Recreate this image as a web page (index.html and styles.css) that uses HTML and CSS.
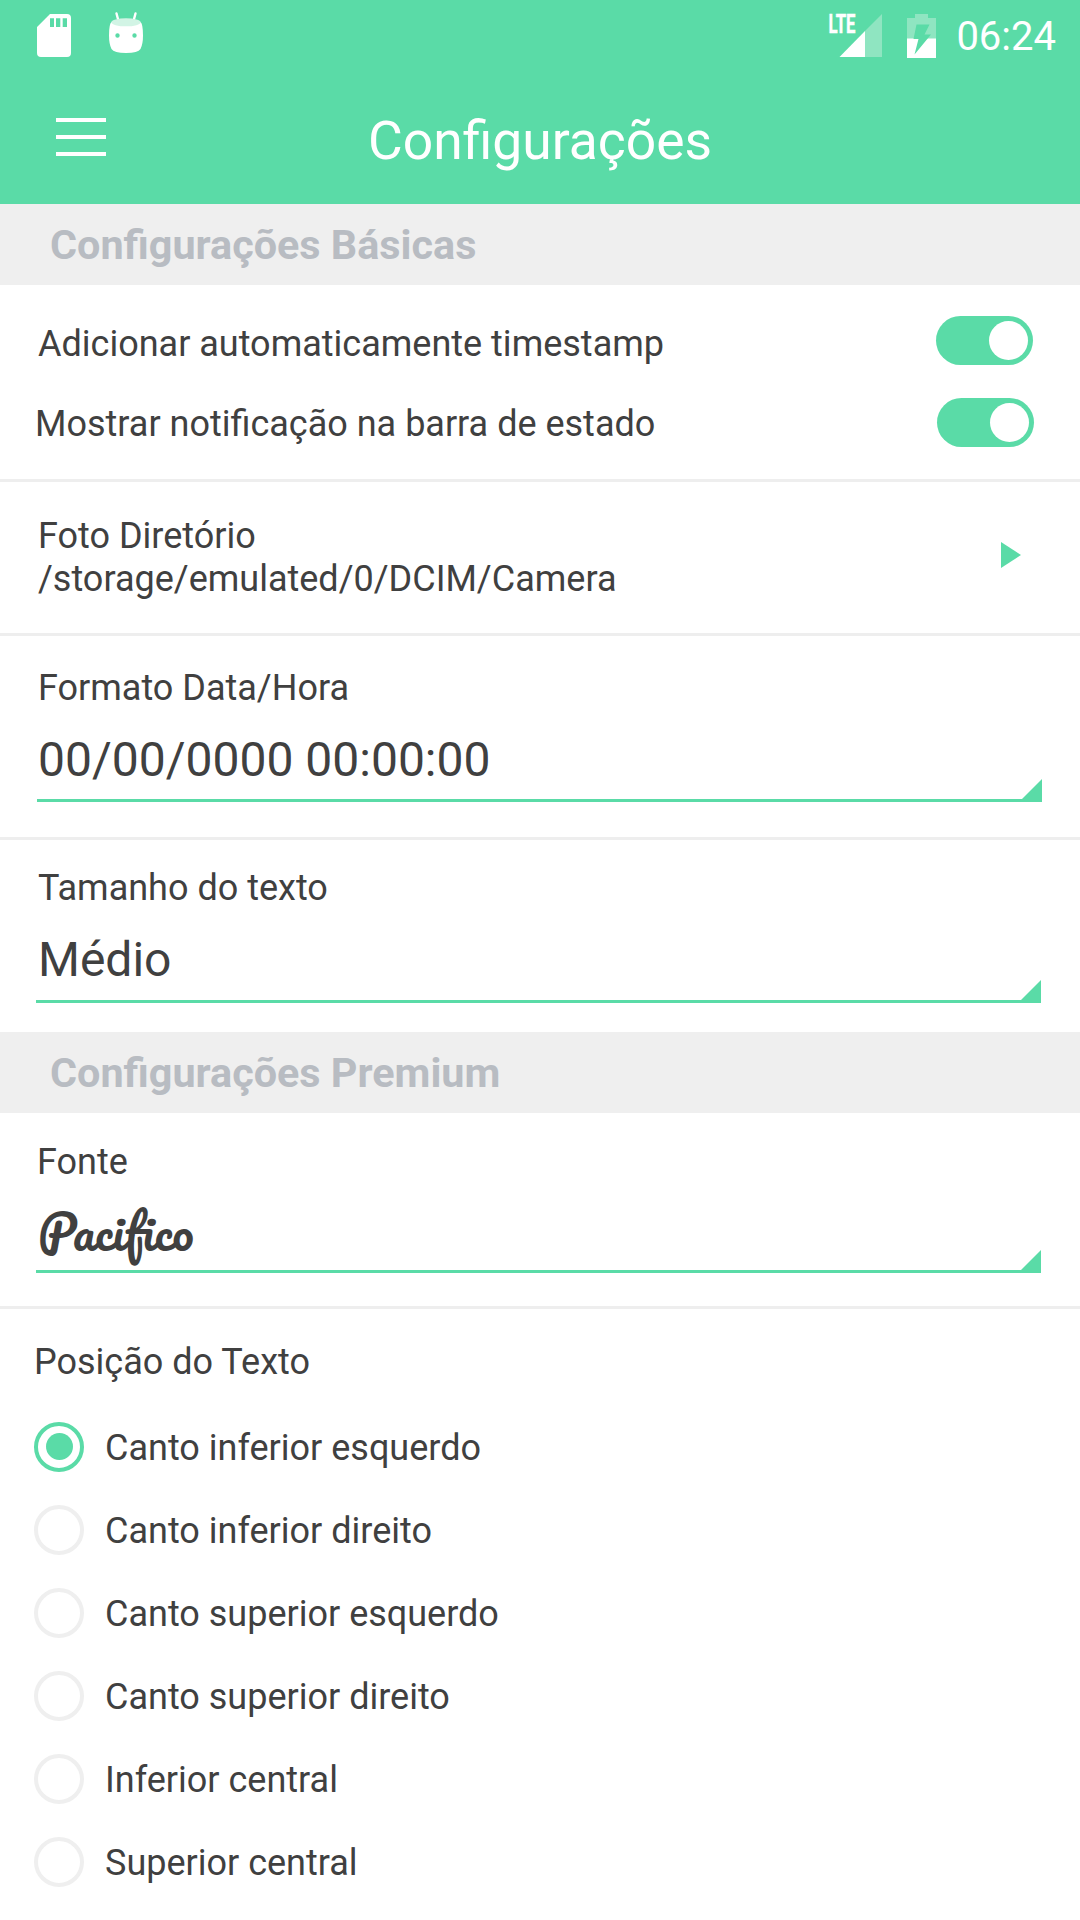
FILE: index.html
```html
<!DOCTYPE html>
<html lang="pt">
<head>
<meta charset="utf-8">
<title>Configurações</title>
<link rel="stylesheet" href="styles.css">
</head>
<body>
<header class="top">
  <div class="status">
    <svg class="sd" width="34" height="43" viewBox="0 0 34 43"><path fill="#fff" fill-rule="evenodd" d="M13 0H30Q34 0 34 4V39Q34 43 30 43H4Q0 43 0 39V13ZM13 4.300V13H17V4.300ZM19 4.300V13H23.300V4.300ZM25.700 4.300V13H30V4.300Z"/></svg>
    <svg class="droid" width="34" height="42" viewBox="0 0 34 42"><path d="M7.500 1.500 9.500 9M26.500 1.500 24.500 9" stroke="#fff" stroke-width="2.400" stroke-linecap="round"/><path fill="#fff" fill-rule="evenodd" d="M2.500 10Q17 18 31.500 10Q34 12 34 23.500Q34 32 31.500 37Q29 41 17 41Q5 41 2.500 37Q0 32 0 23.500Q0 12 2.500 10ZM8.500 21.300a2.200 2.200 0 1 0 .01 4.400a2.200 2.200 0 1 0-.01-4.400ZM25.500 21.300a2.200 2.200 0 1 0 .01 4.400a2.200 2.200 0 1 0-.01-4.400Z"/><ellipse cx="17" cy="10.300" rx="14.700" ry="4" fill="#d2f4e5"/></svg>
    <svg class="signal" width="58" height="52" viewBox="-4 -8 58 52"><path fill="#8fe5c1" d="M53 0V43H36V17Z"/><path fill="#fff" d="M36 17V43H10.500Z"/><text class="lte" x="-0.500" y="19" textLength="27" lengthAdjust="spacingAndGlyphs">LTE</text></svg>
    <svg class="battery" width="29" height="44" viewBox="0 0 29 44"><path fill="#8fe5c1" d="M8 0H21V4H29V25H0V4H8Z"/><path fill="#fff" d="M0 24.500H29V44H0Z"/><path fill="#5adba7" d="M9.500 10.500H22.500L17.500 20.500H24L7.500 40.500L11.500 25H6.500Z"/></svg>
    <span class="clock">06:24</span>
  </div>
  <div class="bar">
    <div class="menu"><i></i><i></i><i></i></div>
    <h1>Configurações</h1>
  </div>
</header>
<main>
  <h2>Configurações Básicas</h2>
  <section class="group switches">
    <div class="switch"><span>Adicionar automaticamente timestamp</span><b class="toggle"></b></div>
    <div class="switch second"><span>Mostrar notificação na barra de estado</span><b class="toggle"></b></div>
  </section>
  <section class="group folder">
    <div>Foto Diretório<br>/storage/emulated/0/DCIM/Camera</div>
    <svg class="play" width="20" height="26" viewBox="0 0 20 26"><path fill="#5adba7" d="M0 0 20 13 0 26Z"/></svg>
  </section>
  <section class="group format">
    <div class="label">Formato Data/Hora</div>
    <div class="select"><span>00/00/0000 00:00:00</span><svg width="20" height="23" viewBox="0 0 20 23"><path fill="#5adba7" d="M20 0V23H0V20Z"/></svg></div>
  </section>
  <section class="group size">
    <div class="label">Tamanho do texto</div>
    <div class="select"><span>Médio</span><svg width="20" height="23" viewBox="0 0 20 23"><path fill="#5adba7" d="M20 0V23H0V20Z"/></svg></div>
  </section>
  <h2>Configurações Premium</h2>
  <section class="group font">
    <div class="label">Fonte</div>
    <div class="select"><span class="script">Pacifico</span><svg width="20" height="23" viewBox="0 0 20 23"><path fill="#5adba7" d="M20 0V23H0V20Z"/></svg></div>
  </section>
  <section class="position">
    <div>Posição do Texto</div>
    <ul>
      <li><i class="radio on"></i>Canto inferior esquerdo</li>
      <li><i class="radio"></i>Canto inferior direito</li>
      <li><i class="radio"></i>Canto superior esquerdo</li>
      <li><i class="radio"></i>Canto superior direito</li>
      <li><i class="radio"></i>Inferior central</li>
      <li><i class="radio"></i>Superior central</li>
    </ul>
  </section>
</main>
</body>
</html>
```
FILE: styles.css
```css
* { box-sizing: border-box; }
body {
  margin: 0;
  width: 1080px;
  height: 1920px;
  overflow: hidden;
  background: #fff;
  color: #404040;
  font: 36px/42px Roboto, sans-serif;
}
svg { display: block; flex: none; }
h1, h2, ul { margin: 0; padding: 0; }

.top { height: 204px; background: #5adba7; color: #fff; }
.status { display: flex; align-items: flex-start; height: 72px; padding: 0 24px 0 37px; }
.sd { margin-top: 14px; }
.droid { margin: 12px 0 0 38px; }
.signal { margin: 6px 0 0 auto; }
.lte { font: 700 26px Roboto, sans-serif; fill: #fff; stroke: #fff; stroke-width: .5px; }
.battery { margin: 14px 0 0 24px; }
.clock { margin: 12px 0 0 20px; font-size: 40px; line-height: 50px; }
.bar { display: grid; grid-template-columns: 106px 1fr 106px; height: 132px; }
.menu { display: flex; flex-direction: column; gap: 13px; padding: 46.4px 0 0 56px; }
.menu i { height: 4px; background: #fff; }
h1 { padding-top: 38px; font-size: 53.4px; line-height: 62px; font-weight: 400; text-align: center; }

h2 {
  height: 81px;
  padding: 16px 50px 0;
  background: #efefef;
  color: #b8bcc2;
  font-size: 41.35px;
  line-height: 50px;
  font-weight: 700;
}

.group { border-bottom: 3px solid #eee; }
.switches { height: 197px; padding: 31px 0 0; }
.switch { display: flex; justify-content: space-between; align-items: flex-start; height: 82px; padding: 0 47px 0 38px; }
.switch span { padding-top: 7px; }
.switch.second { padding: 0 46px 0 35px; }
.switch.second span { padding-top: 5px; }
.toggle { display: flex; justify-content: flex-end; width: 97px; height: 49px; padding: 5px 5.5px; border-radius: 25px; background: #5adba7; }
.toggle::before { content: ""; width: 39px; height: 39px; border-radius: 50%; background: #fff; }

.folder { display: flex; justify-content: space-between; height: 154px; padding: 33px 59px 0 38px; line-height: 43px; }
.play { margin-top: 27px; }

.format { height: 204px; padding: 31px 38px 0 37px; }
.size { height: 192px; padding: 27px 39px 0 36px; border: 0; }
.font { height: 196px; padding: 28px 39px 0 36px; }
.label { padding-left: 1px; }
.size .label { padding-left: 2px; }
.select { display: flex; justify-content: space-between; align-items: flex-end; height: 93px; border-bottom: 3px solid #5adba7; font-size: 48px; line-height: 56px; }
.select span { height: 67px; padding-left: 1px; }
.select svg { margin-bottom: -3px; }
.size .select { height: 94px; }
.size .select span { height: 68px; padding-left: 2px; }
.font .select { height: 90px; }
.select .script { padding-left: 2px; font-family: Pacifico, Lato, cursive; font-size: 47.8px; }

.position { padding: 32px 34px 0; }
ul { margin-top: 38px; list-style: none; }
li { display: flex; align-items: flex-start; gap: 21px; height: 83px; padding-top: 6px; }
.radio { display: flex; align-items: center; justify-content: center; width: 50px; height: 50px; margin: -5.5px 0 0; border: 4px solid #efefef; border-radius: 50%; }
.radio.on { border-color: #5adba7; }
.radio.on::before { content: ""; width: 27px; height: 27px; border-radius: 50%; background: #5adba7; }
```
